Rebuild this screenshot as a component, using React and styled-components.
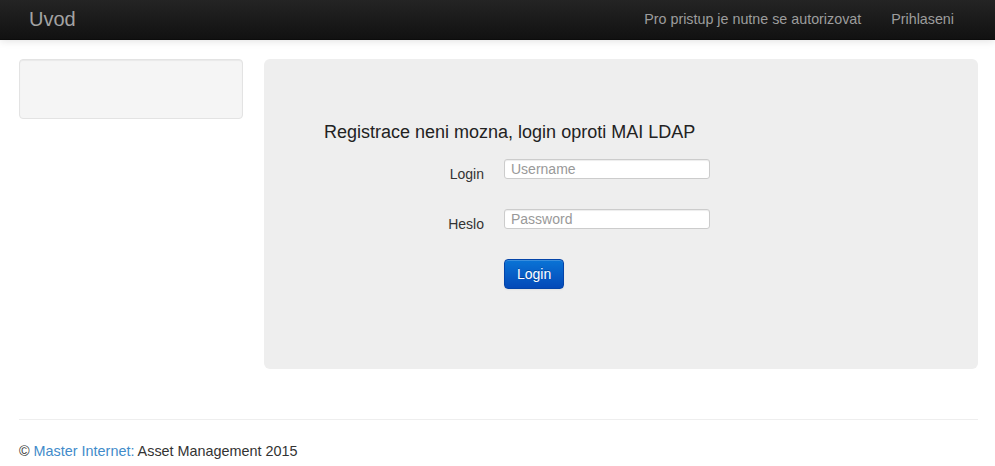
import React from "react";
import styled, { createGlobalStyle } from "styled-components";

const Global = createGlobalStyle`
  html, body { margin: 0; padding: 0; background: #fff; }
  body {
    font-family: "Liberation Sans", Arial, Helvetica, sans-serif;
    font-size: 14px;
    line-height: 20px;
    color: #333;
  }
  * { box-sizing: border-box; }
`;

const Navbar = styled.header`
  height: 40px;
  background: linear-gradient(#242424, #111111);
  border-bottom: 1px solid #0c0c0c;
  box-shadow: 0 1px 8px rgba(0, 0, 0, 0.12);
  display: flex;
  align-items: center;
  justify-content: space-between;
  padding: 0 26px 0 29px;
`;

const Brand = styled.a`
  color: #a3a3a3;
  font-size: 20px;
  line-height: 20px;
  text-decoration: none;
  margin-top: -2px;
`;

const NavList = styled.nav`
  display: flex;
  height: 100%;
`;

const NavLink = styled.a`
  color: #9d9d9d;
  font-size: 14.3px;
  line-height: 20px;
  padding: 9px 15px 11px;
  text-decoration: none;
`;

const Container = styled.div`
  width: 959px;
  margin-left: 19px;
`;

const Row = styled.div`
  display: flex;
  gap: 21px;
  padding-top: 19px;
  align-items: flex-start;
`;

const Well = styled.aside`
  width: 224px;
  height: 60px;
  background: #f5f5f5;
  border: 1px solid #e3e3e3;
  border-radius: 4px;
  box-shadow: inset 0 1px 1px rgba(0, 0, 0, 0.05);
`;

const Hero = styled.section`
  flex: 1;
  background: #eeeeee;
  border-radius: 6px;
  padding: 60px;
  height: 310px;
`;

const Heading = styled.h3`
  margin: 0 0 13px;
  font-size: 18px;
  font-weight: normal;
  line-height: 27px;
  color: #222;
`;

const ControlGroup = styled.div`
  display: flex;
  align-items: flex-start;
  margin-bottom: ${(p) => p.$mb ?? 25}px;
`;

const Label = styled.label`
  width: 160px;
  text-align: right;
  padding-top: 5px;
  line-height: 20px;
  color: #333;
  margin-right: 20px;
`;

const Input = styled.input`
  width: 206px;
  height: 20px;
  padding: 0 6px;
  border: 1px solid #cccccc;
  border-radius: 3px;
  background: #fff;
  box-shadow: inset 0 1px 1px rgba(0, 0, 0, 0.075);
  font-family: "Liberation Sans", Arial, sans-serif;
  font-size: 14px;
  color: #555;
  &::placeholder { color: #999; }
`;

const Button = styled.button`
  margin-left: 180px;
  height: 30px;
  padding: 4px 12px;
  font-family: "Liberation Sans", Arial, sans-serif;
  font-size: 14px;
  line-height: 20px;
  color: #fff;
  text-shadow: 0 -1px 0 rgba(0, 0, 0, 0.25);
  background: linear-gradient(#0a74d6, #0449b8);
  border: 1px solid #0444a8;
  border-radius: 4px;
  box-shadow: inset 0 1px 0 rgba(255, 255, 255, 0.2), 0 1px 2px rgba(0, 0, 0, 0.05);
`;

const Rule = styled.hr`
  margin: 50px 0 0;
  border: 0;
  border-top: 1px solid #eeeeee;
  border-bottom: 1px solid #ffffff;
`;

const Footer = styled.footer`
  padding-top: 20px;
  font-size: 14.4px;
  line-height: 20px;
  color: #333;
`;

const FooterLink = styled.a`
  color: #428bca;
  text-decoration: none;
`;

export default function App() {
  return (
    <>
      <Global />
      <Navbar>
        <Brand href="#">Uvod</Brand>
        <NavList>
          <NavLink href="#">Pro pristup je nutne se autorizovat</NavLink>
          <NavLink href="#">Prihlaseni</NavLink>
        </NavList>
      </Navbar>
      <Container>
        <Row>
          <Well />
          <Hero>
            <Heading>Registrace neni mozna, login oproti MAI LDAP</Heading>
            <form onSubmit={(e) => e.preventDefault()}>
              <ControlGroup>
                <Label>Login</Label>
                <Input type="text" placeholder="Username" />
              </ControlGroup>
              <ControlGroup>
                <Label>Heslo</Label>
                <Input type="password" placeholder="Password" />
              </ControlGroup>
              <ControlGroup $mb={0}>
                <Button type="submit">Login</Button>
              </ControlGroup>
            </form>
          </Hero>
        </Row>
        <Rule />
        <Footer>
          © <FooterLink href="#">Master Internet:</FooterLink> Asset Management 2015
        </Footer>
      </Container>
    </>
  );
}
